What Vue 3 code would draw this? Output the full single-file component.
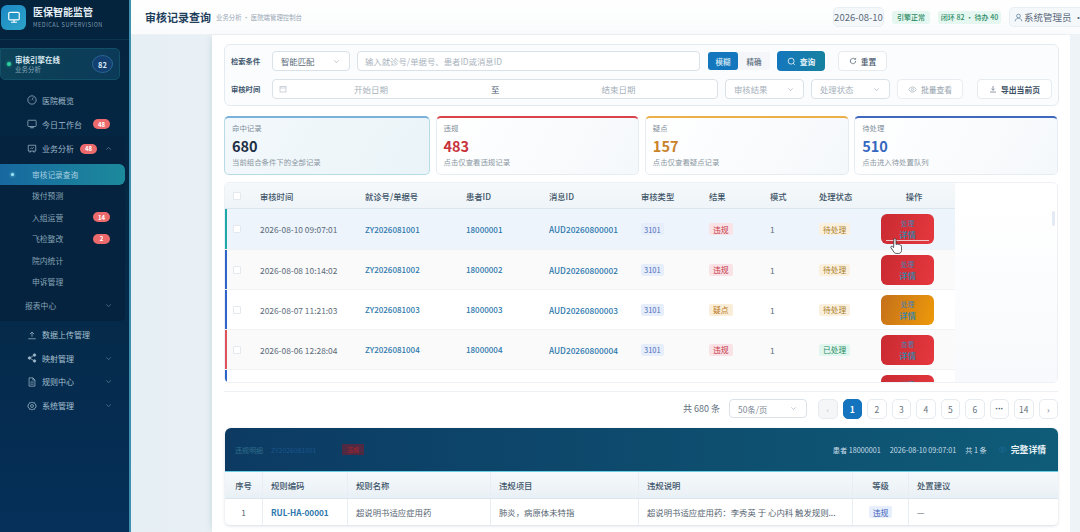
<script setup>
const subItems = [
  { label: '拨付预测' },
  { label: '入组运营', badge: '14' },
  { label: '飞检整改', badge: '2' },
  { label: '院内统计' },
  { label: '申诉管理' }
]
const stats = [
  { key: 'hit', label: '命中记录', num: '680', hint: '当前组合条件下的全部记录' },
  { key: 'vio', label: '违规', num: '483', hint: '点击仅查看违规记录' },
  { key: 'sus', label: '疑点', num: '157', hint: '点击仅查看疑点记录' },
  { key: 'pen', label: '待处理', num: '510', hint: '点击进入待处置队列' }
]
const rows = [
  { time: '2026-08-10 09:07:01', no: 'ZY2026081001', pid: '18000001', msg: 'AUD20260800001', res: '违规', rc: 'vio', st: '待处理', sc: 'wait', edge: 'teal', op: 'red', bg: 'cur', act: '处理' },
  { time: '2026-08-08 10:14:02', no: 'ZY2026081002', pid: '18000002', msg: 'AUD20260800002', res: '违规', rc: 'vio', st: '待处理', sc: 'wait', edge: 'blue', op: 'red', bg: 'alt', act: '处理' },
  { time: '2026-08-07 11:21:03', no: 'ZY2026081003', pid: '18000003', msg: 'AUD20260800003', res: '疑点', rc: 'sus', st: '待处理', sc: 'wait', edge: 'blue', op: 'amber', bg: '', act: '处理' },
  { time: '2026-08-06 12:28:04', no: 'ZY2026081004', pid: '18000004', msg: 'AUD20260800004', res: '违规', rc: 'vio', st: '已处理', sc: 'done', edge: 'red', op: 'red', bg: 'alt', act: '查看' }
]
const pages = ['2', '3', '4', '5', '6', '···', '14']
</script>

<template>
  <div class="app">
    <aside class="side">
      <div class="brand">
        <div class="logo">
          <svg width="14" height="14" viewBox="0 0 24 24" fill="none" stroke="#fff" stroke-width="2"><rect x="3" y="4" width="18" height="13" rx="2"/><path d="M12 17v4M7 21h10"/></svg>
        </div>
        <div>
          <div class="brand-t">医保智能监管</div>
          <div class="brand-s">MEDICAL SUPERVISION</div>
        </div>
      </div>
      <div class="engine">
        <span class="dot"></span>
        <div class="engine-txt">
          <div class="engine-t">审核引擎在线</div>
          <div class="engine-s">业务分析</div>
        </div>
        <span class="engine-n">82</span>
      </div>
      <nav class="nav">
        <div class="item">
          <svg class="ic" viewBox="0 0 24 24"><circle cx="12" cy="12" r="10"/><path d="M12 12l3-6M7 13h1M16 13h1"/></svg>
          <span>医院概览</span>
        </div>
        <div class="item">
          <svg class="ic" viewBox="0 0 24 24"><rect x="2" y="3" width="20" height="15" rx="2"/><path d="M12 18v3M7 21h10"/></svg>
          <span>今日工作台</span>
          <em class="badge b-far">48</em>
        </div>
        <div class="group">
          <div class="item g-head">
            <svg class="ic" viewBox="0 0 24 24"><path d="M3 3h18v14H3zM8 17l-1 4M16 17l1 4M8 12l3-3 2 2 3-3"/></svg>
            <span>业务分析</span>
            <em class="badge b-near">48</em>
            <svg class="chev" viewBox="0 0 12 12"><path d="M3 7.5l3-3 3 3"/></svg>
          </div>
          <div class="active"><i></i><span>审核记录查询</span></div>
          <div v-for="s in subItems" :key="s.label" class="sub">
            <span>{{ s.label }}</span>
            <em v-if="s.badge" class="badge">{{ s.badge }}</em>
          </div>
          <div class="rep">
            <span>报表中心</span>
            <svg class="chev" viewBox="0 0 12 12"><path d="M3 4.5l3 3 3-3"/></svg>
          </div>
        </div>
        <div class="item low">
          <svg class="ic" viewBox="0 0 24 24"><path d="M12 16V5M7 10l5-5 5 5M3 21h18"/></svg>
          <span>数据上传管理</span>
        </div>
        <div class="item low">
          <svg class="ic" viewBox="0 0 24 24"><circle cx="18" cy="5" r="3" fill="#9db7c8"/><circle cx="6" cy="12" r="3" fill="#9db7c8"/><circle cx="18" cy="19" r="3" fill="#9db7c8"/><path d="M8.5 10.5l7-4M8.5 13.5l7 4"/></svg>
          <span>映射管理</span>
          <svg class="chev" viewBox="0 0 12 12"><path d="M3 4.5l3 3 3-3"/></svg>
        </div>
        <div class="item low">
          <svg class="ic" viewBox="0 0 24 24"><path d="M14 2H5v20h14V7zM14 2v5h5M8 12h8M8 17h8"/></svg>
          <span>规则中心</span>
          <svg class="chev" viewBox="0 0 12 12"><path d="M3 4.5l3 3 3-3"/></svg>
        </div>
        <div class="item low">
          <svg class="ic" viewBox="0 0 24 24"><circle cx="12" cy="12" r="3.5"/><path d="M12 2l2.5 2.6 3.6-.6 1 3.5 3 2-1.5 2.500 1.500 2.500-3 2-1 3.500-3.600-.6L12 22l-2.500-2.600-3.600.6-1-3.500-3-2L3.400 12 1.900 9.500l3-2 1-3.500 3.600.6z"/></svg>
          <span>系统管理</span>
          <svg class="chev" viewBox="0 0 12 12"><path d="M3 4.5l3 3 3-3"/></svg>
        </div>
      </nav>
    </aside>

    <div class="main">
      <header class="top">
        <h1>审核记录查询</h1>
        <span class="crumb">业务分析 · 医院端管理控制台</span>
        <div class="top-r">
          <span class="date">2026-08-10</span>
          <span class="chip c1">引擎正常</span>
          <span class="chip c2">闭环 82 · 待办 40</span>
          <span class="user">
            <svg class="user-ic" viewBox="0 0 24 24" fill="none" stroke="#5b7f9c" stroke-width="2"><circle cx="12" cy="8" r="5"/><path d="M3 22c1-6 5-8 9-8s8 2 9 8"/></svg>
            <span>系统管理员 ·</span>
          </span>
        </div>
      </header>

      <div class="canvas">
        <section class="panel">
          <div class="filter">
            <div class="f-row">
              <label>检索条件</label>
              <div class="sel s-match"><span class="dark">智能匹配</span><svg class="sv" viewBox="0 0 12 12"><path d="M3 4.500l3 3 3-3"/></svg></div>
              <div class="inp">输入就诊号/单据号、患者ID或消息ID</div>
              <div class="toggle"><span class="on">模糊</span><span>精确</span></div>
              <button class="query">
                <svg width="9" height="9" viewBox="0 0 24 24" fill="none" stroke="#fff" stroke-width="2"><circle cx="11" cy="11" r="8"/><path d="M17 17l4 4"/></svg>
                查询
              </button>
              <button class="reset">
                <svg width="8" height="8" viewBox="0 0 24 24" fill="none" stroke="#55677a" stroke-width="2.500"><path d="M20 12a8 8 0 1 1-3-6.200M20 3v4h-4"/></svg>
                重置
              </button>
            </div>
            <div class="f-row">
              <label>审核时间</label>
              <div class="range">
                <svg width="8" height="8" viewBox="0 0 24 24" fill="none" stroke="#b5bfc9" stroke-width="2"><rect x="3" y="4" width="18" height="17"/><path d="M3 9h18"/></svg>
                <span class="r-a">开始日期</span>
                <span class="r-m">至</span>
                <span class="r-b">结束日期</span>
              </div>
              <div class="sel s-f"><span>审核结果</span><svg class="sv" viewBox="0 0 12 12"><path d="M3 4.500l3 3 3-3"/></svg></div>
              <div class="sel s-f"><span>处理状态</span><svg class="sv" viewBox="0 0 12 12"><path d="M3 4.500l3 3 3-3"/></svg></div>
              <button class="batch">
                <svg width="9" height="9" viewBox="0 0 24 24" fill="none" stroke="#aab4be" stroke-width="2"><path d="M2 12s4-7 10-7 10 7 10 7-4 7-10 7-10-7-10-7z"/><circle cx="12" cy="12" r="3"/></svg>
                批量查看
              </button>
              <button class="export">
                <svg width="8" height="8" viewBox="0 0 24 24" fill="none" stroke="#55677a" stroke-width="2"><path d="M12 3v12M7 11l5 5 5-5M3 21h18"/></svg>
                导出当前页
              </button>
            </div>
          </div>

          <div class="stats">
            <div v-for="s in stats" :key="s.key" class="stat" :class="s.key">
              <div class="st-l">{{ s.label }}</div>
              <div class="st-n">{{ s.num }}</div>
              <div class="st-h">{{ s.hint }}</div>
            </div>
          </div>

          <div class="tbl">
            <div class="tbl-in">
              <div class="tr th">
                <div><span class="cb"></span></div>
                <div>审核时间</div><div>就诊号/单据号</div><div>患者ID</div><div>消息ID</div>
                <div>审核类型</div><div>结果</div><div>模式</div><div>处理状态</div><div class="c">操作</div>
              </div>
              <div v-for="(r, i) in rows" :key="r.no" class="tr td" :class="[r.bg, 'e-' + r.edge]">
                <div><span class="cb"></span></div>
                <div class="time">{{ r.time }}</div>
                <div class="link">{{ r.no }}</div>
                <div class="link">{{ r.pid }}</div>
                <div class="link msg">{{ r.msg }}</div>
                <div><span class="tag t-type">3101</span></div>
                <div><span class="tag" :class="'t-' + r.rc">{{ r.res }}</span></div>
                <div class="time">1</div>
                <div><span class="tag" :class="'t-' + r.sc">{{ r.st }}</span></div>
                <div>
                  <div class="op" :class="['o-' + r.op, { hov: i === 0 }]">
                    <span class="op-a">{{ r.act }}</span>
                    <span class="op-b">详情</span>
                  </div>
                  <svg v-if="i === 0" class="hand" width="12" height="16" viewBox="0 0 22 30"><path d="M7 3a2 2 0 0 1 4 0v9l2-.5a2 2 0 0 1 2 .5l2 .3a2 2 0 0 1 2 1l.5 .3a2 2 0 0 1 2 2V23c0 3-2 6-6 6h-4c-3 0-4-2-6-5l-4-6c-1-2 1-3 3-2l2 2z" fill="#fff" stroke="#3a3a3a" stroke-width="1.600"/></svg>
                </div>
              </div>
              <div class="tr td e-blue last">
                <div></div><div></div><div></div><div></div><div></div><div></div><div></div><div></div><div></div>
                <div>
                  <div class="op o-red"><span class="op-a">处理</span><span class="op-b"></span></div>
                </div>
              </div>
            </div>
            <div class="tbl-rest"><i></i></div>
          </div>

          <div class="pager">
            <span class="total">共 680 条</span>
            <div class="sel s-size"><span>50条/页</span><svg class="sv" viewBox="0 0 12 12"><path d="M3 4.500l3 3 3-3"/></svg></div>
            <div class="pages">
              <span class="pg dis">‹</span>
              <span class="pg cur-p">1</span>
              <span v-for="p in pages" :key="p" class="pg" :class="{ dots: p === '···' }">{{ p }}</span>
              <span class="pg">›</span>
            </div>
          </div>

          <div class="detail">
            <div class="d-head">
              <span class="d-a">违规明细</span>
              <span class="d-b">ZY2026081001</span>
              <span class="d-c">违规</span>
              <div class="d-r">
                <span>患者 18000001</span>
                <span>2026-08-10 09:07:01</span>
                <span>共 1 条</span>
                <span class="d-full">
                  <svg width="9" height="9" viewBox="0 0 24 24" fill="none" stroke="#1c6c9c" stroke-width="2"><path d="M2 12s4-7 10-7 10 7 10 7-4 7-10 7-10-7-10-7z"/><circle cx="12" cy="12" r="3"/></svg>
                  完整详情
                </span>
              </div>
            </div>
            <div class="d-tr d-th">
              <div class="c">序号</div><div>规则编码</div><div>规则名称</div><div>违规项目</div><div>违规说明</div><div class="c">等级</div><div>处置建议</div>
            </div>
            <div class="d-tr d-td">
              <div class="c">1</div><div class="rule">RUL-HA-00001</div><div>超说明书适应症用药</div><div>肺炎，病原体未特指</div>
              <div>超说明书适应症用药：李秀英 于 心内科 触发规则...</div>
              <div class="c"><span class="tag t-lv">违规</span></div><div>—</div>
            </div>
          </div>
        </section>
      </div>
    </div>
  </div>
</template>

<style>
html, body { margin: 0; height: 100%; overflow: hidden; background: #eef3f7; }
</style>

<style scoped>
* { box-sizing: border-box; }
.app { display: flex; width: 1080px; height: 532px; overflow: hidden; font-family: "Noto Sans CJK SC", "Noto Sans", sans-serif; color: #44566a; font-size: 8px; }

/* Sidebar */
.side { width: 131px; flex: none; background: linear-gradient(180deg, #04233d 0%, #052a49 60%, #06305a 100%); border-right: 2px solid #3f8fae; }
.brand { display: flex; align-items: center; gap: 7px; height: 40px; padding: 0 0 5px 1px; border-bottom: 1px solid #0c3650; }
.logo { width: 25px; height: 25px; border-radius: 6px; background: linear-gradient(135deg, #1c88c4, #2ca4c8); display: flex; align-items: center; justify-content: center; }
.brand-t { font-size: 10px; font-weight: 700; color: #e4eef4; line-height: 14px; }
.brand-s { font-size: 5.500px; color: #7f9cb0; letter-spacing: .55px; line-height: 9px; margin-top: 2px; }
.engine { display: flex; align-items: center; height: 32px; margin: 8px 9px 0 0; padding: 0 6px; background: linear-gradient(100deg, #0d4258, #0b3a58); border: 1px solid #125068; border-radius: 0 5px 5px 5px; }
.dot { width: 4px; height: 4px; border-radius: 50%; background: #2ed0a0; box-shadow: 0 0 3px #2ed0a0; }
.engine-txt { margin-left: 4px; flex: 1; }
.engine-t { font-size: 7.500px; font-weight: 700; color: #dcebf2; line-height: 10px; }
.engine-s { font-size: 6.500px; color: #88a7b8; line-height: 9px; }
.engine-n { width: 21px; height: 18px; border-radius: 50%; background: #123f70; border: 1px solid #2b6594; color: #dbe9f3; font-size: 7.500px; font-weight: 700; display: flex; align-items: center; justify-content: center; }
.nav { padding-top: 8px; }
.item { display: flex; align-items: center; height: 24px; padding-left: 27px; color: #9db7c8; font-size: 8px; position: relative; }
.ic { width: 10px; height: 10px; margin-right: 5px; fill: none; stroke: #9db7c8; stroke-width: 1.800; flex: none; }
.badge { font-style: normal; background: #ec6a6c; color: #fff; font-size: 6px; font-weight: 700; border-radius: 6px; width: 17px; height: 10px; display: inline-flex; align-items: center; justify-content: center; }
.b-far { position: absolute; left: 93px; }
.b-near { margin-left: 6px; }
.chev { width: 9px; height: 9px; fill: none; stroke: #5d7f95; stroke-width: 1; position: absolute; left: 104px; }
.group { background: #05233f; border-radius: 0 5px 5px 0; width: 125px; padding-bottom: 3px; }
.g-head { height: 25px; }
.active { height: 21px; margin-top: 3px; width: 125px; border-radius: 0 6px 6px 0; background: linear-gradient(90deg, #17689f, #1c8a9c); display: flex; align-items: center; padding-left: 11px; color: #a8cfe0; font-size: 7.700px; }
.active i { width: 3px; height: 3px; border-radius: 50%; background: #9fe8fa; box-shadow: 0 0 3px #9fe8fa; margin-right: 18px; }
.sub { height: 21.500px; display: flex; align-items: center; padding-left: 32px; color: #87a4b6; font-size: 7.800px; position: relative; }
.sub .badge { position: absolute; left: 93px; }
.rep { height: 24px; display: flex; align-items: center; padding-left: 25px; color: #87a4b6; font-size: 7.800px; position: relative; margin-top: 1px; }
.low { height: 23.600px; color: #a6c0d0; }
.group + .low { margin-top: 2.500px; }

/* Top */
.main { flex: 1; min-width: 0; display: flex; flex-direction: column; }
.top { height: 35px; flex: none; display: flex; align-items: center; padding-left: 14px; background: linear-gradient(180deg, #fff, #fafbfc); border-bottom: 1px solid #eef2f5; white-space: nowrap; }
.top h1 { margin: 0; font-size: 11px; font-weight: 700; color: #1e3f5c; }
.crumb { margin-left: 5px; font-size: 6.400px; color: #9aa8b5; }
.top-r { margin-left: auto; display: flex; align-items: center; width: 247px; flex: none; }
.date { height: 20px; width: 51px; flex: none; border: 1px solid #e8eef3; background: #f5f8fb; border-radius: 5px; font-size: 9.500px; color: #5a6a7a; display: flex; align-items: center; justify-content: center; }
.chip { height: 13px; border-radius: 3px; background: #e5f7f0; color: #2a8a64; font-size: 7px; font-weight: 500; display: flex; align-items: center; justify-content: center; flex: none; }
.c1 { width: 38px; margin-left: 8px; }
.c2 { width: 63px; margin-left: 8px; }
.user { margin-left: 8px; flex: 1; min-width: 0; height: 20px; padding-left: 4px; border: 1px solid #e8eef3; border-right: 0; border-radius: 5px 0 0 5px; background: #f5f8fb; font-size: 9.500px; color: #5a6a7a; display: flex; align-items: center; gap: 1px; }
.user-ic { width: 9px; height: 9px; flex: none; }

.canvas { flex: 1; min-height: 0; padding-left: 81px; padding-right: 10px; background: linear-gradient(90deg, #e6eff4, #f2f6f9 40%, #eef3f7); }
.panel { height: 100%; background: #fff; padding: 9px 12px 0 12px; box-shadow: -4px 0 6px -3px rgba(120, 150, 170, .25); display: flex; flex-direction: column; }

/* Filter */
.filter { height: 62px; flex: none; border: 1px solid #e3ebf1; border-radius: 6px; background: #fbfcfd; padding: 6px 6px 0 6px; display: flex; flex-direction: column; gap: 8px; margin-right: -1px; }
.f-row { display: flex; align-items: center; height: 20px; }
.f-row label { width: 41px; flex: none; font-size: 7.300px; font-weight: 700; color: #3e566c; }
.sel { height: 20px; border: 1px solid #d9e2e9; border-radius: 4px; background: #fff; display: flex; align-items: center; justify-content: space-between; padding: 0 8px; font-size: 8.400px; color: #a6b0ba; flex: none; }
.sel .dark { color: #5a6a7a; }
.sv { width: 9px; height: 9px; fill: none; stroke: #a9b4bf; stroke-width: 1; }
.s-match { width: 78px; margin-right: 7px; }
.inp { width: 343px; height: 20px; border: 1px solid #d9e2e9; border-radius: 4px; background: #fff; padding-left: 7px; display: flex; align-items: center; color: #a9b3bd; font-size: 8.400px; flex: none; }
.toggle { margin-left: 8px; display: flex; width: 62px; height: 18px; background: #f4f6f9; border-radius: 3px; flex: none; font-size: 7.500px; font-weight: 500; color: #5e6e7e; }
.toggle span { flex: 1; display: flex; align-items: center; justify-content: center; }
.toggle .on { flex: none; width: 30px; background: #1477bd; color: #dcecf6; border-radius: 3px; }
button { font-family: inherit; display: flex; align-items: center; justify-content: center; gap: 4px; height: 20px; flex: none; border-radius: 4px; font-size: 7.800px; padding: 0; }
.query { margin-left: 7px; width: 48px; border: 0; background: linear-gradient(90deg, #1477bd, #17819f); color: #e8f4fa; font-weight: 700; }
.reset { margin-left: 13px; width: 49px; border: 1px solid #e6ebf0; background: #fff; color: #44566a; font-weight: 500; }
.range { width: 446px; height: 20px; flex: none; border: 1px solid #d9e2e9; border-radius: 4px; background: #fff; display: flex; align-items: center; padding-left: 6px; font-size: 8.500px; color: #a6b0ba; }
.r-a { margin-left: 67px; }
.r-m { margin-left: 103px; color: #44566a; }
.r-b { margin-left: 102px; }
.s-f { width: 79px; margin-left: 7px; }
.batch { margin-left: 7px; width: 66px; border: 1px solid #e9edf1; background: #fff; color: #a5afb9; font-weight: 500; }
.export { margin-left: 14px; width: 75px; border: 1px solid #e6ebf0; background: #fff; color: #3c4f62; font-weight: 700; }

/* Stats */
.stats { margin-top: 10px; height: 59px; flex: none; display: flex; gap: 5.500px; }
.stat { flex: 1; min-width: 0; border: 1px solid #e6edf2; border-top: 2px solid; border-radius: 5px; padding: 5px 7px 0 7px; background: linear-gradient(120deg, #fff, #f5f8fb); }
.hit { flex: 0 0 206px; border-color: #7ab2dc #b7dbe4 #b7dbe4 #b7dbe4; background: linear-gradient(120deg, #f3f8fb, #eaf4f8); }
.vio { border-top-color: #d9444a; }
.sus { border-top-color: #ecb04a; }
.pen { border-top-color: #3f68bf; }
.st-l { font-size: 7.400px; color: #7e8c99; line-height: 9px; }
.st-n { font-size: 14.500px; font-weight: 700; line-height: 18px; margin-top: 5px; color: #1e2f45; }
.vio .st-n { color: #c8323a; }
.sus .st-n { color: #c8822a; }
.pen .st-n { color: #3568c0; }
.st-h { font-size: 7.400px; color: #8b97a2; line-height: 10px; margin-top: 2px; }

/* Table */
.tbl { margin-top: 7px; height: 201px; flex: none; border: 1px solid #edf1f5; border-radius: 5px; display: flex; overflow: hidden; background: #fff; }
.tbl-in { width: 730px; flex: none; }
.tbl-rest { flex: 1; background: linear-gradient(180deg, #fff, #fff 12%, #f7f9fc); padding: 28px 2px 0 0; display: flex; justify-content: flex-end; }
.tbl-rest i { width: 3px; height: 15px; background: #e3eaf4; border-radius: 2px; }
.tr { display: grid; grid-template-columns: 27px 105px 101px 83px 92px 68px 61px 49px 62px 82px; align-items: center; }
.tr > div { padding-left: 8px; white-space: nowrap; position: relative; }
.th { height: 26px; background: linear-gradient(180deg, #f6f9fb, #eef4f8); border-bottom: 1px solid #dbe5ec; font-size: 8.300px; font-weight: 500; color: #3e5468; }
.th .c { padding-left: 0; text-align: center; }
.td { height: 40px; border-bottom: 1px solid #f0f3f6; background: #fff; font-size: 8px; }
.cur { background: #edf4fc; }
.alt { background: #fafafa; }
.e-teal { box-shadow: inset 2px 0 0 #1da8a8; height: 41px; }
.e-blue { box-shadow: inset 2px 0 0 #2f64c8; }
.e-red { box-shadow: inset 2px 0 0 #e0525a; }
.cb { display: block; width: 8px; height: 8px; border: 1px solid #e4e9ee; background: #fff; border-radius: 1px; }
.time { color: #5c6b79; font-size: 8.400px; }
.link { color: #2d78ac; font-weight: 500; font-size: 8px; }
.msg { font-size: 8.300px; }
.tag { display: inline-flex; align-items: center; justify-content: center; height: 12px; padding: 0 4px; border-radius: 2px; font-size: 7.800px; font-weight: 400; }
.t-type { background: #e6edfb; color: #4b6bb8; font-size: 7.500px; padding: 0 3px; }
.t-vio { background: #fae3e6; color: #c4374a; }
.t-sus { background: #fbeed8; color: #b9781f; }
.t-wait { background: #fbf0de; color: #a9802f; }
.t-done { background: #e1f6ee; color: #1f8a62; }
.t-lv { background: #e7eefc; color: #3e63b8; }
.op { width: 53px; height: 30px; border-radius: 6px; display: flex; flex-direction: column; align-items: center; justify-content: center; position: relative; }
.o-red { background: linear-gradient(110deg, #c92a32, #e5383e); }
.o-amber { background: linear-gradient(110deg, #c4701a, #ee9a0a); }
.op-a { font-size: 6.800px; line-height: 10px; color: #4a7fb0; }
.op-b { font-size: 8.500px; line-height: 12px; min-height: 12px; font-weight: 500; color: #2f86ac; }
.hov::after { content: ""; position: absolute; left: 5px; right: 5px; bottom: 3px; height: 1px; background: #f0c5c8; }
.hand { position: absolute; left: 17px; top: 24px; }

/* Pager */
.pager { margin-top: 8px; height: 37px; flex: none; border-top: 1px solid #eef1f4; padding-top: 7px; display: flex; align-items: flex-start; justify-content: flex-end; }
.total { font-size: 9px; color: #64717e; line-height: 20px; margin-right: 9px; }
.s-size { width: 78px; height: 19px; margin-right: 11px; color: #7a8793; }
.pages { display: flex; gap: 5px; }
.pg { width: 19.500px; height: 20px; border: 1px solid #e6ebf0; border-radius: 5px; background: #fff; color: #64717e; font-size: 8.500px; display: flex; align-items: center; justify-content: center; }
.dots { font-family: "Liberation Sans", sans-serif; font-weight: 700; font-size: 9px; letter-spacing: -.3px; color: #44566a; }
.dis { background: #f5f6f8; color: #b9c1c9; }
.cur-p { background: #1474bd; border-color: #1474bd; color: #fff; font-weight: 700; }

/* Detail */
.detail { flex: none; border-radius: 6px 6px 5px 5px; box-shadow: 0 1px 3px rgba(120, 140, 160, .3); overflow: hidden; margin-left: 1px; }
.d-head { height: 44px; background: linear-gradient(90deg, #0c3a62, #0f5c78); border-bottom: 1px solid #69cfe0; display: flex; align-items: center; padding: 0 12px 0 10px; white-space: nowrap; }
.d-a { font-size: 7px; color: #2f6d8a; }
.d-b { margin-left: 8px; font-size: 6.800px; color: #1a5590; width: 71px; }
.d-c { font-size: 6px; color: #a8242a; background: #4f2a42; width: 22px; height: 11px; text-align: center; line-height: 11px; }
.d-r { margin-left: auto; display: flex; align-items: center; gap: 9px; font-size: 7.200px; color: #c9dee8; }
.d-full { margin-left: 2px; display: flex; align-items: center; gap: 4px; font-size: 8.800px; font-weight: 700; color: #e8f2f7; }
.d-tr { display: grid; grid-template-columns: 38px 85px 143px 148px 214px 56px 149px; align-items: center; }
.d-tr > div { height: 100%; display: flex; align-items: center; padding-left: 8px; border-right: 1px solid #e8eef3; white-space: nowrap; }
.d-tr > div.c { justify-content: center; padding-left: 0; }
.d-tr > div:last-child { border-right: 0; }
.d-th { height: 27px; background: linear-gradient(180deg, #f5f9fb, #e9f0f5); border-bottom: 1px solid #dbe5ec; font-size: 8.400px; font-weight: 500; color: #3e5468; }
.d-td { height: 26px; background: #fff; font-size: 8.400px; color: #55636f; }
.d-tr > .rule { color: #2d78ac; font-weight: 700; font-size: 8.200px; }
</style>
